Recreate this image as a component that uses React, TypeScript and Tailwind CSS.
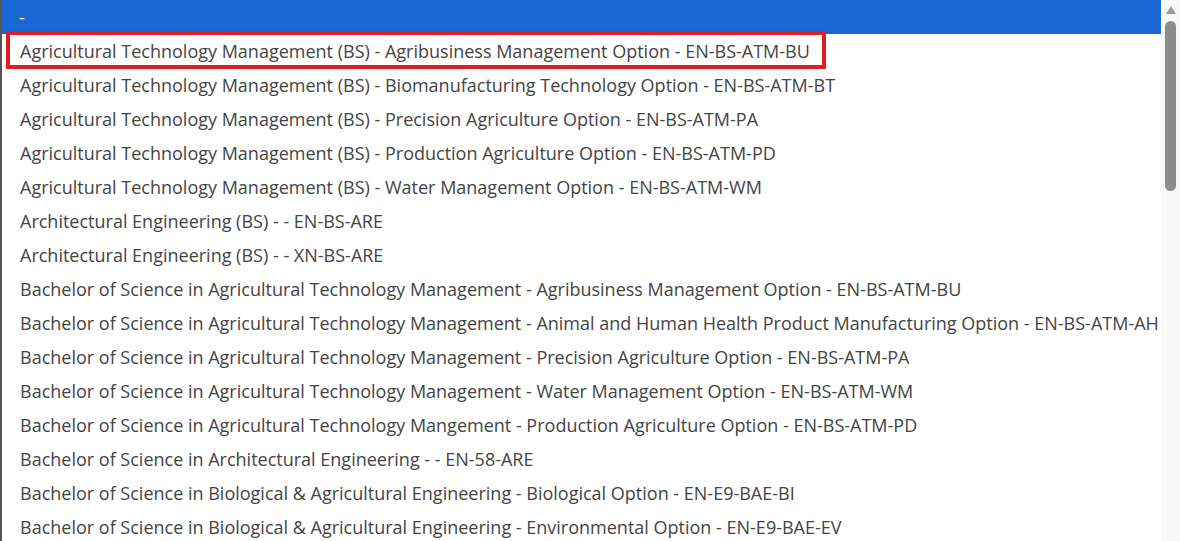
const options = [
  'Agricultural Technology Management (BS) - Agribusiness Management Option - EN-BS-ATM-BU',
  'Agricultural Technology Management (BS) - Biomanufacturing Technology Option - EN-BS-ATM-BT',
  'Agricultural Technology Management (BS) - Precision Agriculture Option - EN-BS-ATM-PA',
  'Agricultural Technology Management (BS) - Production Agriculture Option - EN-BS-ATM-PD',
  'Agricultural Technology Management (BS) - Water Management Option - EN-BS-ATM-WM',
  'Architectural Engineering (BS) - - EN-BS-ARE',
  'Architectural Engineering (BS) - - XN-BS-ARE',
  'Bachelor of Science in Agricultural Technology Management - Agribusiness Management Option - EN-BS-ATM-BU',
  'Bachelor of Science in Agricultural Technology Management - Animal and Human Health Product Manufacturing Option - EN-BS-ATM-AH',
  'Bachelor of Science in Agricultural Technology Management - Precision Agriculture Option - EN-BS-ATM-PA',
  'Bachelor of Science in Agricultural Technology Management - Water Management Option - EN-BS-ATM-WM',
  'Bachelor of Science in Agricultural Technology Mangement - Production Agriculture Option - EN-BS-ATM-PD',
  'Bachelor of Science in Architectural Engineering - - EN-58-ARE',
  'Bachelor of Science in Biological & Agricultural Engineering - Biological Option - EN-E9-BAE-BI',
  'Bachelor of Science in Biological & Agricultural Engineering - Environmental Option - EN-E9-BAE-EV',
];

export default function App() {
  return (
    <div className="flex h-[541px] w-[1180px] overflow-hidden bg-white font-['Open_Sans',sans-serif] text-[18px] text-[#444]">
      <div className="flex min-w-0 flex-1 flex-col border-l-2 border-[#555]">
        <div className="flex h-[34px] shrink-0 items-center bg-[#1a66d3] pl-[17px] text-white">-</div>
        {options.map((opt, i) =>
          i === 0 ? (
            <div key={i} className="h-[34px] shrink-0 pt-[1px]">
              <div className="ml-[8px] flex h-[30px] w-fit items-center whitespace-nowrap pl-[10px] pr-[12px] pt-[2px] outline-4 outline-[#e31b23]">
                {opt}
              </div>
            </div>
          ) : (
            <div key={i} className="flex h-[34px] shrink-0 items-center whitespace-nowrap pl-[18px]">
              {opt}
            </div>
          )
        )}
      </div>
      <div className="flex w-[19px] shrink-0 flex-col items-center bg-[#f9f9f9] pt-[6px]">
        <div className="h-0 w-0 border-x-[5px] border-b-[8px] border-x-transparent border-b-[#999]" />
        <div className="mt-[7px] h-[170px] w-[11px] rounded-full bg-[#8c8c8c]" />
      </div>
    </div>
  );
}
